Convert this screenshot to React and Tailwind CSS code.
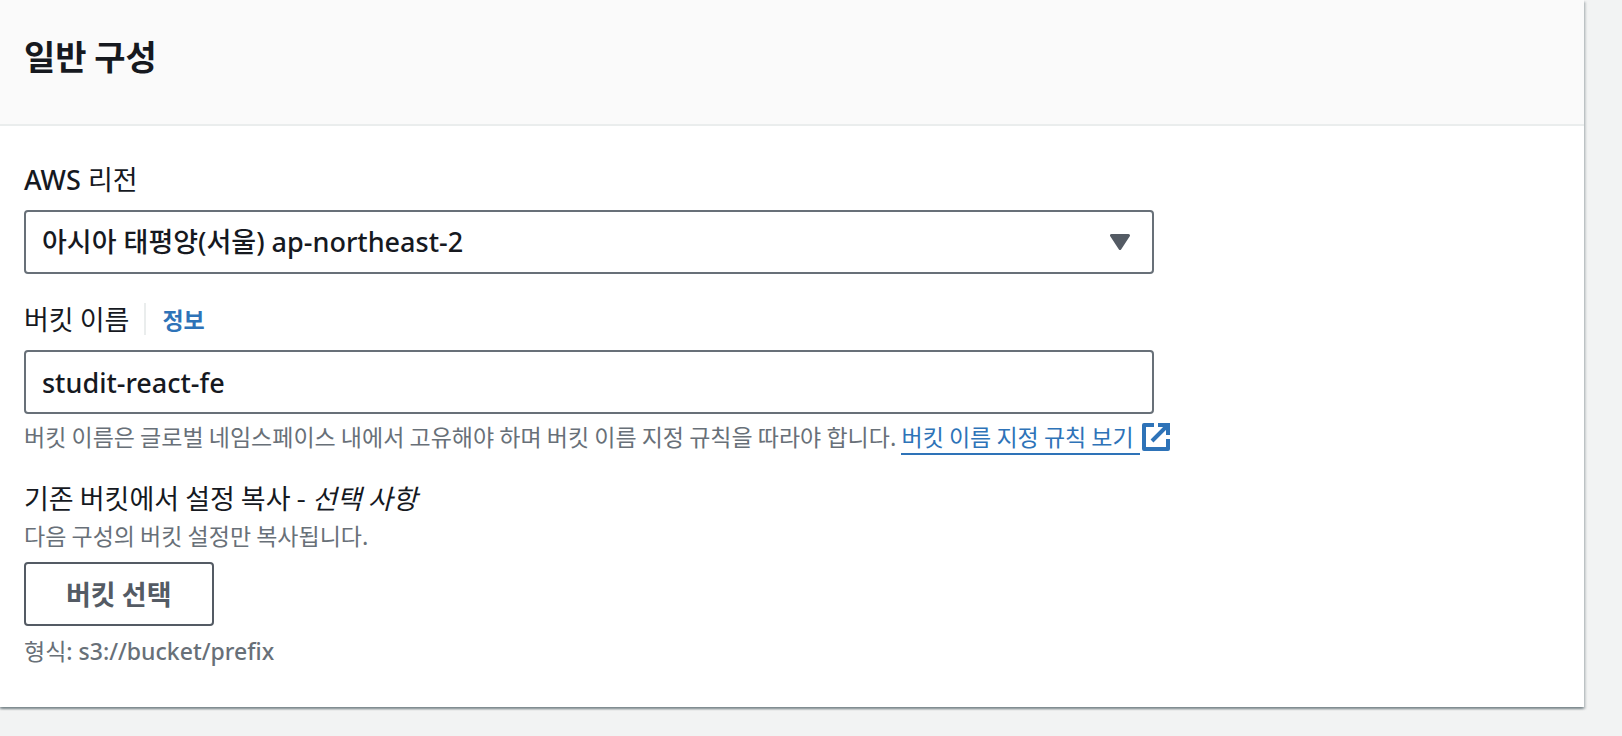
import React, { useState } from "react";

const regions = [
  { value: "ap-northeast-2", label: "아시아 태평양(서울) ap-northeast-2" },
];

function CaretIcon() {
  return (
    <svg
      viewBox="0 0 20 16"
      className="pointer-events-none absolute right-6 top-6 h-4 w-5"
      aria-hidden="true"
    >
      <path
        d="M1.5 1.5h17L10 14.5z"
        fill="#545b64"
        stroke="#545b64"
        strokeWidth="3"
        strokeLinejoin="round"
      />
    </svg>
  );
}

function ExternalIcon() {
  return (
    <svg
      viewBox="0 0 28 28"
      className="ml-[2px] inline-block h-7 w-7 align-[-5px]"
      fill="none"
      stroke="currentColor"
      strokeWidth="4"
      aria-hidden="true"
    >
      <path d="M12 2H2v24h24V16" strokeLinejoin="round" />
      <path d="M16 2h10v10M26 2L10 18" />
    </svg>
  );
}

function App() {
  const [region, setRegion] = useState("ap-northeast-2");
  const [bucketName, setBucketName] = useState("studit-react-fe");

  return (
    <div className="min-h-screen bg-[#f2f3f3] pr-[38px] font-['Noto_Sans_CJK_KR',sans-serif] text-[27px] leading-10 text-[#16191f]">
      <section className="bg-white shadow-[0_2px_2px_0_rgba(0,28,36,0.3),2px_2px_2px_0_rgba(0,28,36,0.15),-2px_2px_2px_0_rgba(0,28,36,0.15)]">
        <header className="border-b-2 border-[#eaeded] bg-[#fafafa] px-6 pt-9 pb-12">
          <h2 className="text-[34px] leading-10 font-bold">일반 구성</h2>
        </header>

        <form
          className="flex flex-col gap-[25px] px-6 pt-[33px] pb-10"
          onSubmit={(e) => e.preventDefault()}
        >
          {/* Region */}
          <div>
            <label htmlFor="region" className="mb-[10px] block">
              <span className="font-['Noto_Sans',sans-serif] font-medium">AWS </span>
              리전
            </label>
            <div className="relative max-w-[1130px]">
              <select
                id="region"
                value={region}
                onChange={(e) => setRegion(e.target.value)}
                className="block h-16 w-full appearance-none rounded-sm border-2 border-[#687078] bg-white px-4 font-['Noto_Sans','Noto_Sans_CJK_KR',sans-serif] font-medium"
              >
                {regions.map((item) => (
                  <option key={item.value} value={item.value}>
                    {item.label}
                  </option>
                ))}
              </select>
              <CaretIcon />
            </div>
          </div>

          {/* Bucket name */}
          <div>
            <div className="mb-[11px] flex items-center">
              <label htmlFor="bucket-name">버킷 이름</label>
              <div className="ml-[15px] flex h-8 items-center border-l-2 border-[#eaeded] pl-4">
                <a href="#info" className="text-[23px] font-bold text-[#2e73b8]">
                  정보
                </a>
              </div>
            </div>
            <input
              id="bucket-name"
              type="text"
              value={bucketName}
              onChange={(e) => setBucketName(e.target.value)}
              className="block h-16 w-full max-w-[1130px] rounded-sm border-2 border-[#687078] bg-white px-4 font-['Noto_Sans','Noto_Sans_CJK_KR',sans-serif] font-medium"
            />
            <p className="mt-[6px] text-[23px] leading-8 text-[#687078]">
              버킷 이름은 글로벌 네임스페이스 내에서 고유해야 하며 버킷 이름 지정
              규칙을 따라야 합니다.{" "}
              <a href="#rules" className="whitespace-nowrap text-[#2e73b8]">
                <span className="border-b-2 border-[#2e73b8] pr-[6px]">
                  버킷 이름 지정 규칙 보기
                </span>
                <ExternalIcon />
              </a>
            </p>
          </div>

          {/* Copy settings */}
          <div className="pt-px">
            <h3 id="copy-label">
              기존 버킷에서 설정 복사 - <i>선택 사항</i>
            </h3>
            <p className="mt-px text-[23px] leading-8 text-[#687078]">
              다음 구성의 버킷 설정만 복사됩니다.
            </p>
            <button
              type="button"
              aria-describedby="copy-label"
              className="mt-[11px] block h-16 rounded-sm border-2 border-[#545b64] bg-white px-10 font-bold text-[#545b64]"
            >
              버킷 선택
            </button>
            <p className="mt-2 text-[23px] leading-8 text-[#687078]">
              형식
              <span className="font-['Noto_Sans',sans-serif] font-medium">
                : s3://bucket/prefix
              </span>
            </p>
          </div>
        </form>
      </section>
    </div>
  );
}

export default App;
